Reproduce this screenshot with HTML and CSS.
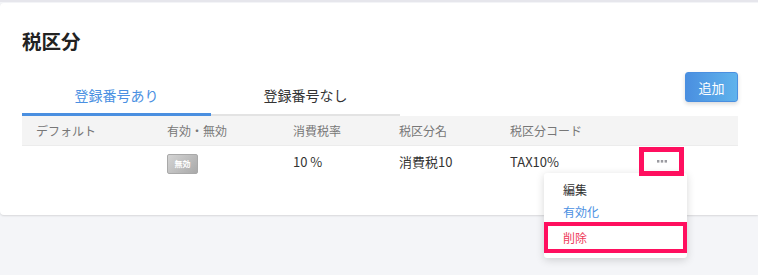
FILE: index.html
```html
<!DOCTYPE html>
<html lang="ja">
<head>
<meta charset="utf-8">
<link rel="stylesheet" href="styles.css">
</head>
<body>
<div class="card">
  <h1 class="title">税区分</h1>
  <div class="toolbar">
    <div class="tabs">
      <div class="tab active">登録番号あり</div>
      <div class="tab">登録番号なし</div>
    </div>
    <button class="add-btn">追加</button>
  </div>
  <div class="table">
    <div class="row head">
      <div class="cell">デフォルト</div>
      <div class="cell">有効・無効</div>
      <div class="cell">消費税率</div>
      <div class="cell">税区分名</div>
      <div class="cell">税区分コード</div>
      <div class="cell"></div>
    </div>
    <div class="row body">
      <div class="cell"></div>
      <div class="cell"><span class="badge">無効</span></div>
      <div class="cell">10 %</div>
      <div class="cell">消費税10</div>
      <div class="cell">TAX10%</div>
      <div class="cell actions">
        <div class="dots-wrap">
          <div class="dots-btn">
            <svg width="10" height="3" viewBox="0 0 10 3"><rect x="0" y="0" width="2.4" height="2.6" fill="#9a9aa0"/><rect x="3.8" y="0" width="2.4" height="2.6" fill="#9a9aa0"/><rect x="7.6" y="0" width="2.4" height="2.6" fill="#9a9aa0"/></svg>
          </div>
          <div class="menu">
            <div class="menu-item">編集</div>
            <div class="menu-item blue">有効化</div>
            <div class="menu-item red marked">削除</div>
          </div>
        </div>
      </div>
    </div>
  </div>
</div>
</body>
</html>
```
FILE: styles.css
```css
html, body {
  margin: 0;
  padding: 0;
}
html {
  background: #f4f5f8;
}
body {
  min-height: 100vh;
  box-sizing: border-box;
  font-family: "Noto Sans CJK JP", "Noto Sans", sans-serif;
  color: #333;
  border-top: 2px solid #e6e6ec;
}
.card {
  position: relative;
  margin-top: 1px;
  background: #fff;
  border-radius: 4px 0 0 4px;
  box-shadow: 0 1px 2px rgba(0, 0, 0, 0.12);
  height: 212px;
  padding: 25px 20px 0 22px;
  box-sizing: border-box;
}
.title {
  margin: 0;
  font-size: 19.5px;
  line-height: 26px;
  font-weight: 700;
  color: #222;
}
.toolbar {
  display: flex;
  justify-content: space-between;
  align-items: flex-start;
  height: 62px;
}
.tabs {
  display: flex;
  align-items: flex-end;
  height: 62px;
}
.tab {
  width: 189px;
  text-align: center;
  font-size: 14px;
  line-height: 20px;
  padding-bottom: 9px;
  border-bottom: 2px solid #e3e3e3;
  color: #333;
}
.tab.active {
  color: #4a90e2;
  padding-bottom: 8px;
  border-bottom: 3px solid #4a8fe0;
}
.add-btn {
  margin-top: 18px;
  width: 53px;
  height: 30px;
  border: 1px solid #4a8fe0;
  border-radius: 3px;
  background: linear-gradient(90deg, #4a8fe0, #5fb3ec);
  color: #fff;
  font-family: inherit;
  font-size: 13px;
  box-shadow: 0 2px 4px rgba(0, 0, 0, 0.15);
  padding: 0;
}
.row {
  display: grid;
  grid-template-columns: 131px 126px 106px 111px 130px 1fr;
  align-items: center;
}
.row.head {
  height: 30px;
  background: #f4f4f4;
  border-bottom: 1px solid #ececec;
  box-sizing: border-box;
  color: #777;
  font-size: 12px;
}
.row.body {
  height: 31px;
  font-size: 13px;
  color: #333;
}
.cell {
  padding-left: 14px;
  line-height: 18px;
}
.badge {
  display: inline-block;
  width: 31px;
  height: 20px;
  margin-top: 4px;
  box-sizing: border-box;
  border: 1px solid #a9a9a9;
  border-radius: 2px;
  background: linear-gradient(135deg, #d4d4d4, #a9a9a9);
  color: #fff;
  font-size: 8px;
  font-weight: 700;
  line-height: 18px;
  text-align: center;
  vertical-align: middle;
}
.actions {
  padding-left: 13px;
  align-self: start;
}
.dots-wrap {
  position: relative;
  width: 45px;
  height: 29px;
  margin-top: 1px;
}
.dots-btn {
  position: relative;
  z-index: 3;
  width: 45px;
  height: 29px;
  box-sizing: border-box;
  border: 5px solid #ff0f5f;
  display: flex;
  align-items: center;
  justify-content: center;
}
.menu {
  position: absolute;
  z-index: 2;
  top: 26px;
  left: -95px;
  width: 143px;
  padding: 6px 0 5px;
  background: #fff;
  border-radius: 3px;
  box-shadow: 0 2px 8px rgba(0, 0, 0, 0.16);
}
.menu-item {
  height: 22px;
  line-height: 22px;
  padding-left: 19px;
  font-size: 12px;
  color: #333;
}
.menu-item.blue {
  color: #4a90e2;
}
.menu-item.red {
  color: #ee3a5a;
}
.menu-item.marked {
  margin-top: -1px;
  height: 31px;
  box-sizing: border-box;
  line-height: 23px;
  border: 4px solid #ff0f5f;
  padding-left: 15px;
}
```
